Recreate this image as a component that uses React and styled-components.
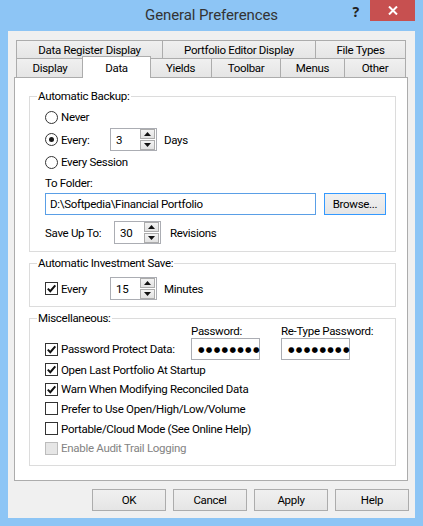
import React from "react";
import styled, { createGlobalStyle } from "styled-components";

const GlobalStyle = createGlobalStyle`
  html, body {
    margin: 0;
    padding: 0;
  }
  body {
    font-family: Roboto, "Noto Sans", sans-serif;
    font-size: 11.5px;
    letter-spacing: -0.3px;
    color: #000;
  }
`;

const Window = styled.div`
  width: 423px;
  height: 526px;
  background: #8dc5f5;
  display: flex;
  flex-direction: column;
`;

const TitleBar = styled.div`
  height: 31px;
  flex-shrink: 0;
  display: grid;
  grid-template-columns: 1fr auto 1fr;
  align-items: start;
`;

const Title = styled.div`
  grid-column: 2;
  font-size: 15px;
  letter-spacing: -0.1px;
  line-height: 30px;
  color: #333;
`;

const Controls = styled.div`
  grid-column: 3;
  justify-self: end;
  display: flex;
  align-items: flex-start;
  margin-right: 8px;
`;

const HelpGlyph = styled.div`
  font-family: "Noto Sans", sans-serif;
  font-weight: bold;
  font-size: 14px;
  line-height: 20px;
  color: #222;
  margin-right: 11px;
  margin-top: 2px;
`;

const CloseButton = styled.div`
  width: 45px;
  height: 21px;
  background: #c75050;
  display: flex;
  align-items: center;
  justify-content: center;
`;

const Client = styled.div`
  flex: 1;
  margin: 0 8px 8px;
  background: #f0f0f0;
  display: flex;
  flex-direction: column;
  padding: 9px 0 7px 6px;
`;

const TabControl = styled.div`
  width: 394px;
  flex: 1;
  display: flex;
  flex-direction: column;
`;

const TabStrip = styled.div`
  padding: 0 2px;
  display: flex;
  flex-direction: column;
`;

const TabRow = styled.div`
  display: flex;
  align-items: flex-start;
  height: ${(p) => p.$h}px;
`;

const Tab = styled.div`
  box-sizing: border-box;
  width: ${(p) => p.$w}px;
  height: ${(p) => p.$h}px;
  border: 1px solid #acacac;
  border-bottom: none;
  background: linear-gradient(#f0f0f0, #e5e5e5);
  margin-right: -1px;
  display: flex;
  align-items: center;
  justify-content: center;
  white-space: nowrap;
`;

const ActiveTab = styled(Tab)`
  position: relative;
  z-index: 1;
  background: #fff;
  margin: -2px -2px -1px -1px;
`;

const Panel = styled.div`
  flex: 1;
  background: #fff;
  border: 1px solid #acacac;
  padding: 11px 11px 0 14px;
  display: flex;
  flex-direction: column;
  gap: 4px;
`;

const Group = styled.fieldset`
  margin: 0;
  padding: 0;
  min-width: 0;
  border: 1px solid #dcdcdc;
`;

const Legend = styled.legend`
  padding: 0 1px;
  margin-left: 7px;
  line-height: 14px;
`;

const GroupBody = styled.div`
  padding: ${(p) => p.$pad};
  display: flex;
  flex-direction: column;
`;

const Row = styled.div`
  display: flex;
  align-items: center;
  height: ${(p) => p.$h}px;
  flex-shrink: 0;
`;

const Lead = styled.div`
  width: ${(p) => p.$w}px;
  flex-shrink: 0;
  display: flex;
  align-items: center;
`;

const Unit = styled.span`
  margin-left: ${(p) => p.$gap}px;
`;

const Choice = styled.label`
  display: flex;
  align-items: center;
  gap: 3px;
  white-space: nowrap;
  color: ${(p) => (p.$disabled ? "#838383" : "#000")};
`;

const CheckSquare = styled.span`
  box-sizing: border-box;
  width: 13px;
  height: 13px;
  flex-shrink: 0;
  border: 1px solid ${(p) => (p.$disabled ? "#bcbcbc" : "#333")};
  background: ${(p) => (p.$disabled ? "#e6e6e6" : "#fff")};
  display: flex;
  align-items: center;
  justify-content: center;
`;

const RadioCircle = styled.span`
  box-sizing: border-box;
  width: 13px;
  height: 13px;
  flex-shrink: 0;
  border-radius: 50%;
  border: 1px solid #333;
  background: #fff;
  display: flex;
  align-items: center;
  justify-content: center;
`;

const RadioDot = styled.span`
  width: 5px;
  height: 5px;
  border-radius: 50%;
  background: #1a1a1a;
`;

const SpinBox = styled.div`
  box-sizing: border-box;
  width: 47px;
  height: 23px;
  border: 1px solid #abadb3;
  background: #fff;
  display: flex;
  align-items: center;
  padding: 0 1px 0 5px;
`;

const SpinValue = styled.span`
  flex: 1;
`;

const SpinButtons = styled.div`
  display: flex;
  flex-direction: column;
  gap: 1px;
`;

const SpinButton = styled.div`
  box-sizing: border-box;
  width: 15px;
  height: 10px;
  border: 1px solid #acacac;
  background: linear-gradient(#f3f3f3, #e2e2e2);
  display: flex;
  align-items: center;
  justify-content: center;
`;

const TextBox = styled.div`
  box-sizing: border-box;
  width: ${(p) => p.$w}px;
  height: 22px;
  border: 1px solid ${(p) => (p.$focus ? "#5a9fe6" : "#abadb3")};
  background: #fff;
  padding-left: ${(p) => p.$pl}px;
  display: flex;
  align-items: center;
  white-space: nowrap;
`;

const Dots = styled.span`
  font-size: 7.5px;
  letter-spacing: 1.3px;
  font-family: "DejaVu Sans", sans-serif;
`;

const PushButton = styled.button`
  box-sizing: border-box;
  width: ${(p) => p.$w}px;
  height: 22px;
  padding: 0;
  font: inherit;
  letter-spacing: inherit;
  color: #000;
  border: 1px solid ${(p) => (p.$default ? "#3399ff" : "#acacac")};
  background: linear-gradient(#f0f0f0, #e5e5e5);
  margin-left: ${(p) => p.$ml || 0}px;
  flex-shrink: 0;
`;

const PassGrid = styled.div`
  display: grid;
  grid-template-columns: 146px 90px auto;
  grid-template-rows: 13px 22px;
  align-items: center;
`;

const PassLabel = styled.div`
  line-height: 13px;
  white-space: nowrap;
`;

const ButtonBar = styled.div`
  display: flex;
  justify-content: flex-end;
  gap: 7px;
  margin-top: 8px;
  padding-right: 6px;
`;

const Arrow = ({ up }) => (
  <svg width="7" height="4" viewBox="0 0 7 4">
    <path d={up ? "M0 4 L3.5 0 L7 4 Z" : "M0 0 L3.5 4 L7 0 Z"} fill="#111" />
  </svg>
);

const Spinner = ({ value }) => (
  <SpinBox>
    <SpinValue>{value}</SpinValue>
    <SpinButtons>
      <SpinButton>
        <Arrow up />
      </SpinButton>
      <SpinButton>
        <Arrow />
      </SpinButton>
    </SpinButtons>
  </SpinBox>
);

const Check = ({ checked, disabled, children }) => (
  <Choice $disabled={disabled}>
    <CheckSquare $disabled={disabled}>
      {checked && (
        <svg width="11" height="11" viewBox="0 0 11 11">
          <path d="M1.8 5.6 L4.3 8.2 L9.3 2.4" fill="none" stroke="#111" strokeWidth="2" />
        </svg>
      )}
    </CheckSquare>
    {children}
  </Choice>
);

const Radio = ({ checked, children }) => (
  <Choice>
    <RadioCircle>{checked && <RadioDot />}</RadioCircle>
    {children}
  </Choice>
);

const topTabs = [
  { label: "Data Register Display", w: 147 },
  { label: "Portfolio Editor Display", w: 154 },
  { label: "File Types", w: 91 },
];

const bottomTabs = [
  { label: "Display", w: 68 },
  { label: "Data", w: 69, active: true },
  { label: "Yields", w: 63 },
  { label: "Toolbar", w: 70 },
  { label: "Menus", w: 65 },
  { label: "Other", w: 62 },
];

const miscOptions = [
  { label: "Open Last Portfolio At Startup", checked: true },
  { label: "Warn When Modifying Reconciled Data", checked: true },
  { label: "Prefer to Use Open/High/Low/Volume" },
  { label: "Portable/Cloud Mode (See Online Help)" },
  { label: "Enable Audit Trail Logging", disabled: true },
];

export default function App() {
  return (
    <>
      <GlobalStyle />
      <Window>
        <TitleBar>
          <Title>General Preferences</Title>
          <Controls>
            <HelpGlyph>?</HelpGlyph>
            <CloseButton>
              <svg width="10" height="9" viewBox="0 0 10 9">
                <path d="M1 0.5 L9 8.5 M9 0.5 L1 8.5" stroke="#fff" strokeWidth="2" />
              </svg>
            </CloseButton>
          </Controls>
        </TitleBar>

        <Client>
          <TabControl>
            <TabStrip>
              <TabRow $h={18}>
                {topTabs.map((t) => (
                  <Tab key={t.label} $w={t.w} $h={18}>
                    {t.label}
                  </Tab>
                ))}
              </TabRow>
              <TabRow $h={19}>
                {bottomTabs.map((t) =>
                  t.active ? (
                    <ActiveTab key={t.label} $w={t.w} $h={22}>
                      {t.label}
                    </ActiveTab>
                  ) : (
                    <Tab key={t.label} $w={t.w} $h={19}>
                      {t.label}
                    </Tab>
                  )
                )}
              </TabRow>
            </TabStrip>

            <Panel>
              <Group>
                <Legend>Automatic Backup:</Legend>
                <GroupBody $pad="3px 9px 7px 15px">
                  <Row $h={22}>
                    <Radio>Never</Radio>
                  </Row>
                  <Row $h={23}>
                    <Lead $w={65}>
                      <Radio checked>Every:</Radio>
                    </Lead>
                    <Spinner value="3" />
                    <Unit $gap={7}>Days</Unit>
                  </Row>
                  <Row $h={22}>
                    <Radio>Every Session</Radio>
                  </Row>
                  <Row $h={20}>To Folder:</Row>
                  <Row $h={22}>
                    <TextBox $w={271} $pl={4} $focus>
                      D:\Softpedia\Financial Portfolio
                    </TextBox>
                    <PushButton $w={62} $ml={8} $default>
                      Browse...
                    </PushButton>
                  </Row>
                  <Row $h={23} style={{ marginTop: 6 }}>
                    <Lead $w={69}>Save Up To:</Lead>
                    <Spinner value="30" />
                    <Unit $gap={9}>Revisions</Unit>
                  </Row>
                </GroupBody>
              </Group>

              <Group>
                <Legend>Automatic Investment Save:</Legend>
                <GroupBody $pad="7px 9px 6px 15px">
                  <Row $h={23}>
                    <Lead $w={65}>
                      <Check checked>Every</Check>
                    </Lead>
                    <Spinner value="15" />
                    <Unit $gap={7}>Minutes</Unit>
                  </Row>
                </GroupBody>
              </Group>

              <Group>
                <Legend>Miscellaneous:</Legend>
                <GroupBody $pad="0 9px 7px 15px">
                  <PassGrid>
                    <span />
                    <PassLabel>Password:</PassLabel>
                    <PassLabel>Re-Type Password:</PassLabel>
                    <Check checked>Password Protect Data:</Check>
                    <TextBox $w={69} $pl={6}>
                      <Dots>●●●●●●●●</Dots>
                    </TextBox>
                    <TextBox $w={69} $pl={6}>
                      <Dots>●●●●●●●●</Dots>
                    </TextBox>
                  </PassGrid>
                  {miscOptions.map((o) => (
                    <Row key={o.label} $h={19.6}>
                      <Check checked={o.checked} disabled={o.disabled}>
                        {o.label}
                      </Check>
                    </Row>
                  ))}
                </GroupBody>
              </Group>
            </Panel>
          </TabControl>

          <ButtonBar>
            <PushButton $w={74}>OK</PushButton>
            <PushButton $w={74}>Cancel</PushButton>
            <PushButton $w={74}>Apply</PushButton>
            <PushButton $w={74}>Help</PushButton>
          </ButtonBar>
        </Client>
      </Window>
    </>
  );
}
